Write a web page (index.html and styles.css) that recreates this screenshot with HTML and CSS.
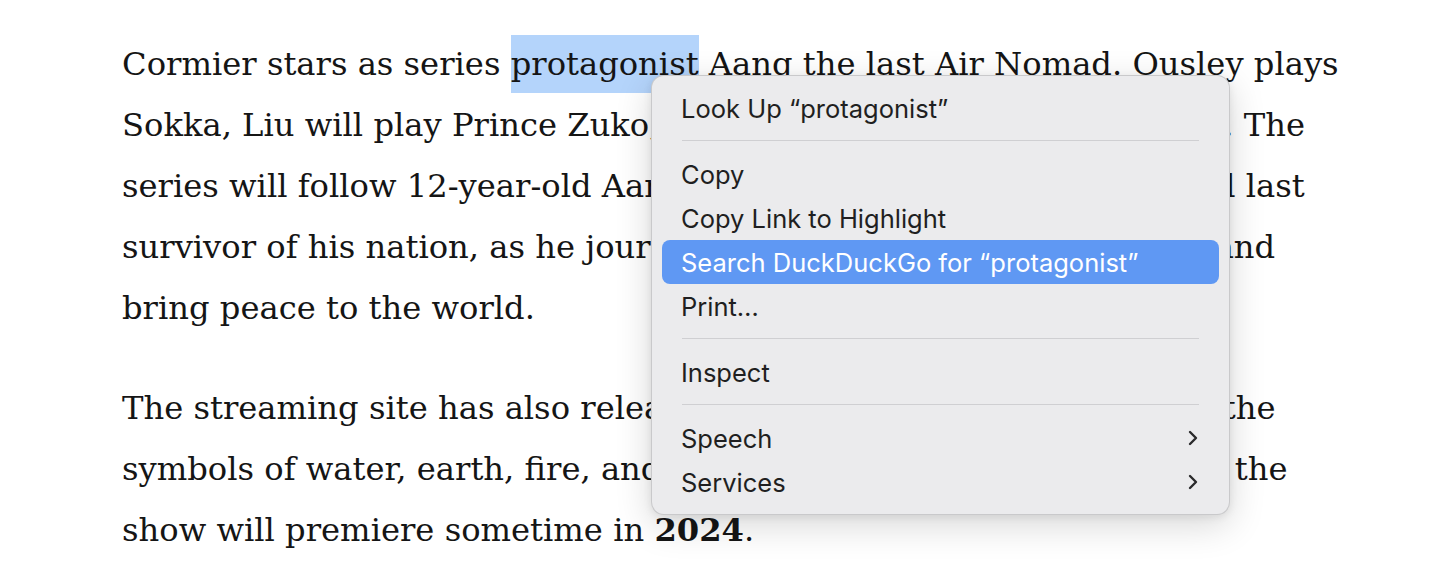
FILE: index.html
```html
<!DOCTYPE html>
<html>
<head>
<meta charset="utf-8">
<link rel="stylesheet" href="styles.css">
</head>
<body>
<main class="article">
  <p class="para">Cormier stars as series <span class="sel">protagonist</span> Aang the last Air Nomad. Ousley plays<br>Sokka, Liu will play Prince Zuko, and Kiawentiio will star as Katara. The<br>series will follow 12-year-old Aang, the young Avatar and the fateful last<br>survivor of his nation, as he journeys to master all of the elements and<br>bring peace to the world.</p>
  <p class="para">The streaming site has also released a new teaser trailer featuring the<br>symbols of water, earth, fire, and air, whilst it also announces when the<br>show will premiere sometime in <strong>2024</strong>.</p>
</main>
<div class="menu">
  <div class="item">Look Up “protagonist”</div>
  <div class="sep"></div>
  <div class="item">Copy</div>
  <div class="item">Copy Link to Highlight</div>
  <div class="item active">Search DuckDuckGo for “protagonist”</div>
  <div class="item">Print…</div>
  <div class="sep"></div>
  <div class="item">Inspect</div>
  <div class="sep"></div>
  <div class="item">Speech<svg class="chev" width="12" height="18" viewBox="0 0 12 18"><path d="M3 3 L9 9 L3 15" fill="none" stroke="#2a2a2c" stroke-width="2.4" stroke-linecap="round" stroke-linejoin="round"/></svg></div>
  <div class="item">Services<svg class="chev" width="12" height="18" viewBox="0 0 12 18"><path d="M3 3 L9 9 L3 15" fill="none" stroke="#2a2a2c" stroke-width="2.4" stroke-linecap="round" stroke-linejoin="round"/></svg></div>
</div>
</body>
</html>
```
FILE: styles.css
```css
html, body {
  margin: 0;
  padding: 0;
  background: #ffffff;
}
.article {
  padding: 34px 0 0 122px;
  font-family: "DejaVu Serif", serif;
  font-size: 32.2px;
  line-height: 61px;
  color: #151515;
}
.para {
  margin: 0 0 39px 0;
  white-space: nowrap;
}
.para strong {
  font-weight: 700;
}
.sel {
  background: #b4d4fb;
  padding: 10px 0;
}
.menu {
  position: absolute;
  left: 651px;
  top: 75px;
  width: 579px;
  box-sizing: border-box;
  padding: 10px 10px 10px 10px;
  background: #ebebed;
  border: 1px solid rgba(0, 0, 0, 0.14);
  border-radius: 13px;
  box-shadow: 0 10px 36px rgba(0, 0, 0, 0.16), 0 2px 8px rgba(0, 0, 0, 0.08);
  font-family: "Inter", "Liberation Sans", sans-serif;
  font-size: 25.5px;
  color: #1f1f21;
}
.item {
  height: 44px;
  display: flex;
  align-items: center;
  justify-content: space-between;
  padding: 0 20px 0 19px;
  border-radius: 8px;
}
.item.active {
  background: #5f98f3;
  color: #ffffff;
}
.sep {
  height: 1px;
  margin: 10px 20px 11px 20px;
  background: #cfcfd2;
}
.chev {
  display: block;
}
```
